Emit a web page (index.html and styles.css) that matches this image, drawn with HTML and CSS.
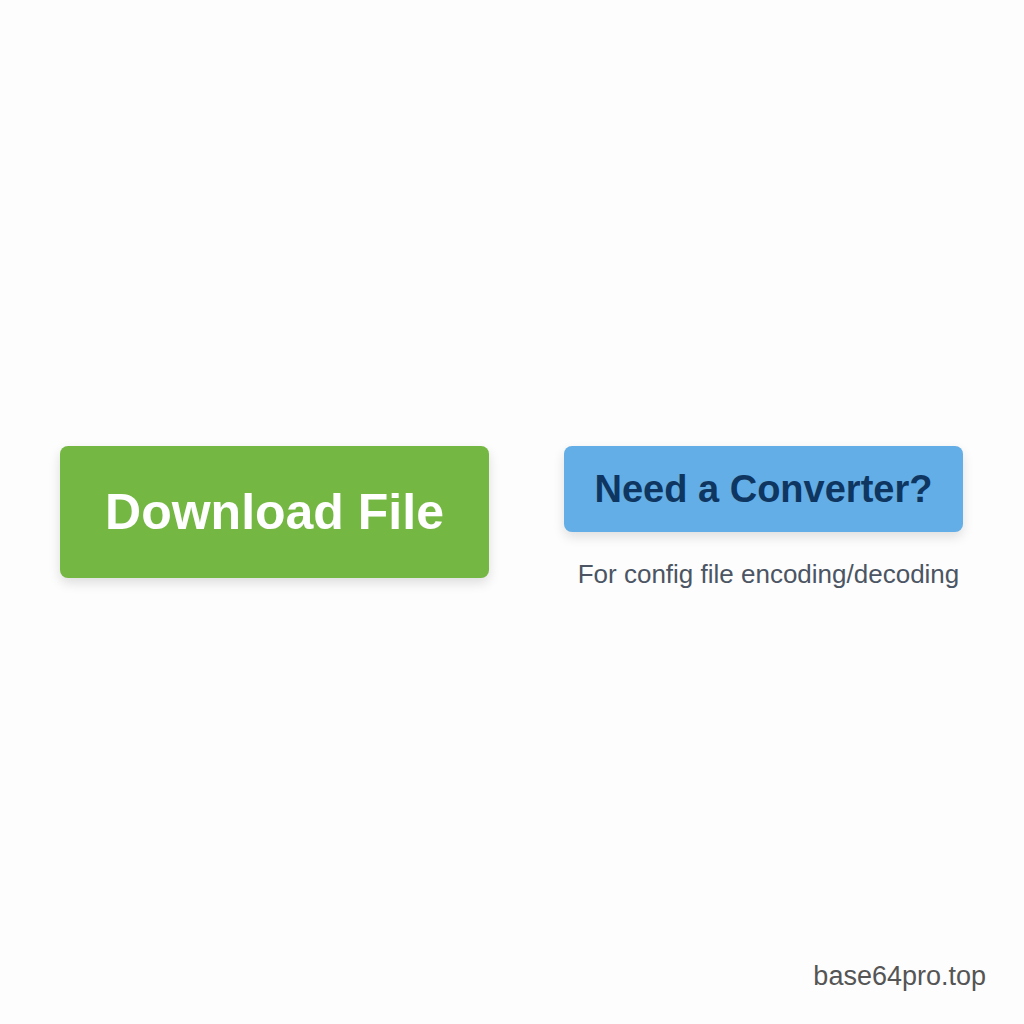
FILE: index.html
```html
<!DOCTYPE html>
<html lang="en">
<head>
<meta charset="utf-8">
<title>Download</title>
<link rel="stylesheet" href="styles.css">
</head>
<body>
<main class="page">
  <div class="actions">
    <a class="btn btn-download" href="#">Download File</a>
    <div class="converter">
      <a class="btn btn-convert" href="#">Need a Converter?</a>
      <p class="note">For config file encoding/decoding</p>
    </div>
  </div>
  <div class="watermark">base64pro.top</div>
</main>
</body>
</html>
```

FILE: styles.css
```css
html, body {
  margin: 0;
  padding: 0;
}
body {
  background: #fdfdfd;
  font-family: "Liberation Sans", Arial, sans-serif;
}
.page {
  position: relative;
  width: 1024px;
  height: 1024px;
  box-sizing: border-box;
  padding-top: 446px;
  padding-left: 60px;
}
.actions {
  display: flex;
  align-items: flex-start;
  gap: 75px;
}
.btn {
  display: flex;
  align-items: center;
  justify-content: center;
  text-decoration: none;
  font-weight: bold;
  border-radius: 8px;
  box-sizing: border-box;
}
.btn-download {
  width: 429px;
  height: 132px;
  background: #74b843;
  color: #ffffff;
  font-size: 50px;
  box-shadow: 0 5px 12px rgba(0, 0, 0, 0.13);
}
.converter {
  display: flex;
  flex-direction: column;
  align-items: center;
  width: 399px;
}
.btn-convert {
  width: 399px;
  height: 86px;
  background: #63aee6;
  color: #0e3660;
  font-size: 38px;
  box-shadow: 0 5px 12px rgba(0, 0, 0, 0.12);
}
.note {
  margin: 27px 0 0 10px;
  font-size: 26px;
  line-height: 30px;
  color: #4b5563;
  white-space: nowrap;
}
.watermark {
  position: absolute;
  right: 38px;
  bottom: 32px;
  font-size: 27px;
  line-height: 31px;
  color: #555555;
}
```
